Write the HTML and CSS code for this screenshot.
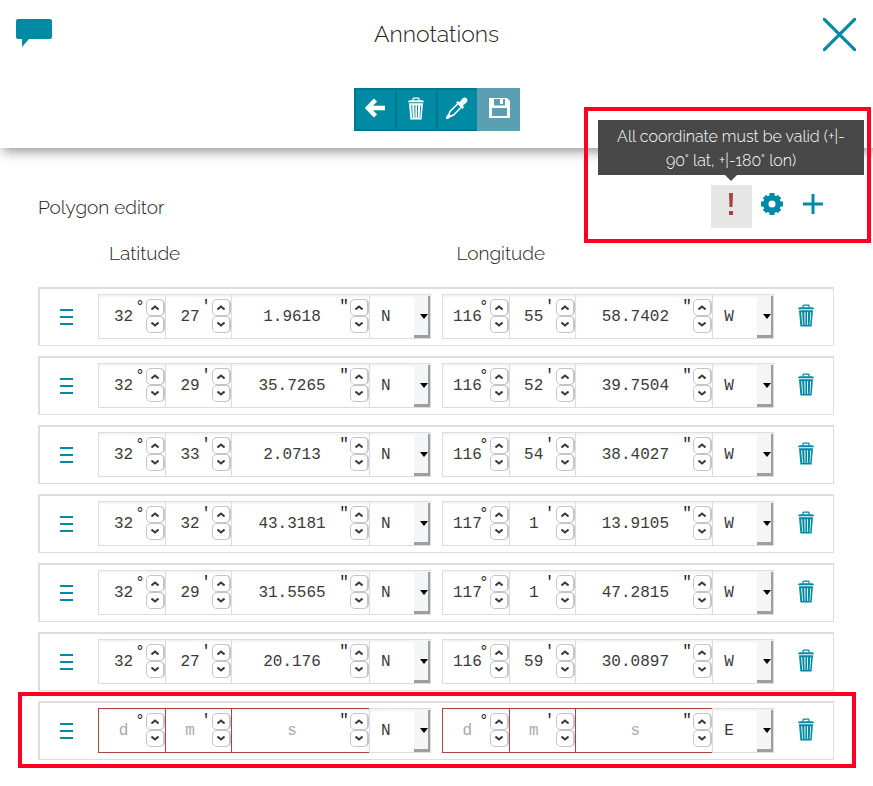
FILE: index.html
```html
<!DOCTYPE html>
<html lang="en">
<head>
<meta charset="utf-8">
<meta name="viewport" content="width=device-width, initial-scale=1">
<title>Annotations</title>
<link rel="stylesheet" href="styles.css">
</head>
<body>
<svg class="sprite" aria-hidden="true">
  <symbol id="i-trash" viewBox="0 0 16 22">
    <path d="M5 3V1.5Q5 .7 5.800 .7H10.200Q11 .7 11 1.500V3" fill="none" stroke="currentColor" stroke-width="1.300"/>
    <path d="M0 4.800Q0 2.800 2 2.800H14Q16 2.800 16 4.800Z" fill="currentColor"/>
    <path fill-rule="evenodd" fill="currentColor" d="M1 5.800H15L13.600 22H2.400ZM3.200 7.800L4.200 20.500H4.900L4.200 7.800ZM6.300 7.800L6.700 20.500H7.400V7.800ZM9 7.800V20.500H9.700L10.100 7.800ZM12.300 7.800L11.600 20.500H12.200L13.200 7.800Z"/>
  </symbol>
</svg>
<header class="header">
  <div class="titlebar">
    <svg class="bubble" viewBox="0 0 36 30" aria-hidden="true"><path d="M2 0H34Q36 0 36 2V18Q36 20 34 20H13L6 28V20H2Q0 20 0 18V2Q0 0 2 0Z" fill="currentColor"/></svg>
    <h1 class="title">Annotations</h1>
    <button class="close" type="button" aria-label="Close"><svg viewBox="0 0 32 32"><path d="M1 1L31 31M31 1L1 31" stroke="currentColor" stroke-width="3" stroke-linecap="round"/></svg></button>
  </div>
  <div class="actions">
    <button type="button" aria-label="Back"><svg width="20" height="20" viewBox="0 0 20 20"><path d="M10.500 2L2.800 10L10.500 18M3 10H20" fill="none" stroke="currentColor" stroke-width="4.500"/></svg></button>
    <button type="button" aria-label="Delete"><svg width="16" height="23"><use href="#i-trash"/></svg></button>
    <button type="button" aria-label="Style"><svg width="22" height="22" viewBox="0 0 22 22"><path fill="currentColor" d="M10 5.500L12 4L13.300 5.200L16.500 1.500Q18.500-.3 20.700 1.300Q22.200 3.500 20.500 5.500L16.800 8.700L18 10L16.500 12Z"/><path fill="none" stroke="currentColor" stroke-width="1.500" d="M11.500 7L4 14.500L2.500 18.500L1.500 20.500L3.500 19.500L7.500 18L15 10.500"/><path fill="currentColor" d="M0 20L2.500 16.500L5.500 19.500L2 22H0Z"/></svg></button>
    <button type="button" aria-label="Save" disabled><svg width="21" height="20" viewBox="0 0 21 20"><path fill="currentColor" fill-rule="evenodd" d="M0 0H18L21 3V20H0ZM5 1V7.500H16V1ZM3 10V18H18V10Z"/><path fill="currentColor" d="M11 1H14V6H11Z"/></svg></button>
  </div>
</header>
<main class="editor">
  <div class="editor-head">
    <h2>Polygon editor</h2>
    <div class="tools">
      <div class="tooltip" role="tooltip" id="hint">All coordinate must be valid (+|-<br>90° lat, +|-180° lon)</div>
      <button class="invalid" type="button" aria-label="Validation" aria-describedby="hint"><svg width="6" height="22" viewBox="0 0 6 22"><path fill="currentColor" d="M1 0H5L4.500 14H1.500ZM1 18H5V22H1Z"/></svg></button>
      <button type="button" aria-label="Settings"><svg width="22" height="22" viewBox="0 0 22 22"><circle cx="11" cy="11" r="6.300" fill="none" stroke="currentColor" stroke-width="5.500"/><path d="M11 0V4M11 18V22M0 11H4M18 11H22M3.500 3.500L6 6M16 16L18.500 18.500M18.500 3.500L16 6M6 16L3.500 18.500" stroke="currentColor" stroke-width="5"/></svg></button>
      <button type="button" aria-label="Add"><svg width="20" height="20" viewBox="0 0 20 20"><path d="M10 0V20M0 10H20" stroke="currentColor" stroke-width="3"/></svg></button>
      <span class="marker marker-tools"></span>
    </div>
  </div>
  <div class="columns"><span>Latitude</span><span>Longitude</span></div>
  <div class="rows" id="rows"></div>
</main>
<script src="script.js"></script>
</body>
</html>
```
FILE: styles.css
```css
* { box-sizing: border-box; }
:root { --teal: #008aa3; --line: #dddddd; --error: #a94442; --mark: #ff0022; }
body { margin: 0; background: #fff; color: #222; font: 300 19px/24px Raleway, Lato, "Open Sans", sans-serif; }
h1, h2 { margin: 0; font-weight: 300; }
button { margin: 0; padding: 0; border: 0; background: none; color: var(--teal); display: flex; align-items: center; justify-content: center; }
svg { display: block; }
.sprite { position: absolute; width: 0; height: 0; }

.header { height: 148px; box-shadow: 4px 2px 12px 1px rgba(0, 0, 0, .45); }
.titlebar { display: grid; grid-template-columns: 36px 1fr 36px; align-items: center; padding: 16px 16px 0; }
.bubble { width: 36px; height: 30px; color: var(--teal); }
.title { font-size: 23px; line-height: 36px; text-align: center; }
.close { height: 36px; }
.close svg { width: 33px; height: 33px; }
.actions { display: flex; justify-content: center; padding-top: 36px; }
.actions button { width: 41px; height: 43px; background: var(--teal); border: 2px solid #00798f; border-right-width: 0; color: #fff; padding-bottom: 3px; }
.actions button:disabled { width: 43px; background: #5c9eb2; border-color: #5c9eb2; }

.editor { padding: 37px 39px 26px 38px; }
.editor-head { display: flex; justify-content: space-between; align-items: center; }
.tools { position: relative; display: flex; }
.editor-head h2 { font-size: 19px; }
.tools button { width: 41px; height: 43px; padding: 0 2px 5px 0; }
.tools .invalid { background: #e6e6e6; color: var(--error); }
.tooltip { position: absolute; right: -30px; bottom: 53px; width: 266px; padding: 5px 0 2px; background: #484848; color: #fff; font-size: 16px; text-align: center; }
.tooltip::after { content: ""; position: absolute; left: 127px; top: 100%; border: 6px solid transparent; border-top-color: #484848; border-bottom: 0; }
.marker { position: absolute; border: 4px solid var(--mark); pointer-events: none; }
.marker-tools { inset: -78px -37px -15px -127px; }
.marker-row { inset: -11px -23px -9px -22px; }

.columns, .row { display: grid; grid-template-columns: 58px 1fr 1fr 59px; }
.columns { padding: 13px 0 22px; }
.columns span:first-child { grid-column: 2; padding-left: 13px; }
.columns span:last-child { padding-left: 21px; }
.rows { display: grid; gap: 10px; }
.row { position: relative; border: 2px solid var(--line); border-width: 2px 1px 1px 2px; padding: 5px 0 6px; align-items: center; }
.handle svg { width: 14px; height: 18px; }
.coord { display: grid; grid-template-columns: 67fr 66fr 138fr 62fr; height: 45px; margin-right: 5px; }
.coord + .coord { margin: 0 0 0 6px; }
.cell { position: relative; }
.cell input, .cell select { width: 100%; height: 100%; margin: 0; border: 1px solid var(--line); border-right-width: 0; border-radius: 0; background: #fff; color: #3a3a3a; box-shadow: inset 0 2px 2px rgba(0, 0, 0, .05); font: 16px/20px "Liberation Mono", monospace; outline: 0; appearance: none; }
.cell input { padding: 0 17px 0 0; text-align: center; }
.cell input::placeholder { color: #aaa; opacity: 1; }
.cell input:invalid { border-color: var(--error); }
.cell select { padding: 0 0 0 11px; border-right-width: 1px; }
.unit { position: absolute; right: 20px; top: 4px; width: 10px; text-align: center; font: 16px/18px "Liberation Mono", monospace; }
.stepper { position: absolute; right: 0; top: 5px; }
.stepper button { width: 19px; height: 17px; border: 1px solid #c2c6ca; border-width: 1px 2px 1px 1px; border-radius: 5px; color: #3a3a3a; background: #fff; }
.stepper svg { width: 8px; height: 5px; }
.drop { position: absolute; right: 1px; top: 2px; bottom: 1px; width: 16px; background: #f4f5f7; border: solid #9e9e9e; border-width: 0 2px 3px 0; pointer-events: none; }
.drop::after { content: ""; position: absolute; right: 0; top: 18px; border: 4px solid transparent; border-top: 5px solid #000; border-bottom: 0; }
.handle, .remove { height: 45px; }
.handle { padding-right: 6px; }
.remove { padding: 0 0 3px 5px; }
```
FILE: script.js
```js
const points = [
  [["32", "27", "1.9618", "N"], ["116", "55", "58.7402", "W"]],
  [["32", "29", "35.7265", "N"], ["116", "52", "39.7504", "W"]],
  [["32", "33", "2.0713", "N"], ["116", "54", "38.4027", "W"]],
  [["32", "32", "43.3181", "N"], ["117", "1", "13.9105", "W"]],
  [["32", "29", "31.5565", "N"], ["117", "1", "47.2815", "W"]],
  [["32", "27", "20.176", "N"], ["116", "59", "30.0897", "W"]],
  [["", "", "", "N"], ["", "", "", "E"]]
];
const units = [["degrees", "d", "°"], ["minutes", "m", "'"], ["seconds", "s", '"']];
const chevron = d => `<svg viewBox="0 0 8 5"><path d="${d}" fill="none" stroke="currentColor" stroke-width="2"/></svg>`;
const number = (value, [name, hint, sign], axis) => `
  <div class="cell"><input type="text" inputmode="decimal" required aria-label="${axis} ${name}" placeholder="${hint}" value="${value}">
  <span class="unit">${sign}</span>
  <div class="stepper"><button type="button" aria-label="Increase ${name}">${chevron("M.5 4.500L4 1.500L7.500 4.500")}</button><button type="button" aria-label="Decrease ${name}">${chevron("M.5 .5L4 3.500L7.500 .5")}</button></div></div>`;
const coord = (c, axis, dirs) => `<div class="coord">${units.map((u, i) => number(c[i], u, axis)).join("")}
  <div class="cell"><select aria-label="${axis} direction">${dirs.map(d => `<option${d === c[3] ? " selected" : ""}>${d}</option>`).join("")}</select><span class="drop"></span></div></div>`;
document.getElementById("rows").innerHTML = points.map(([lat, lon], i) => `
  <div class="row">
    <button class="handle" type="button" aria-label="Reorder"><svg viewBox="0 0 14 18"><path d="M1 2H14M1 9H14M1 16H14" stroke="currentColor" stroke-width="2"/></svg></button>
    ${coord(lat, "Latitude", ["N", "S"])}${coord(lon, "Longitude", ["E", "W"])}
    <button class="remove" type="button" aria-label="Delete vertex"><svg width="16" height="23"><use href="#i-trash"/></svg></button>
    ${i === points.length - 1 ? '<span class="marker marker-row"></span>' : ""}
  </div>`).join("");
```
